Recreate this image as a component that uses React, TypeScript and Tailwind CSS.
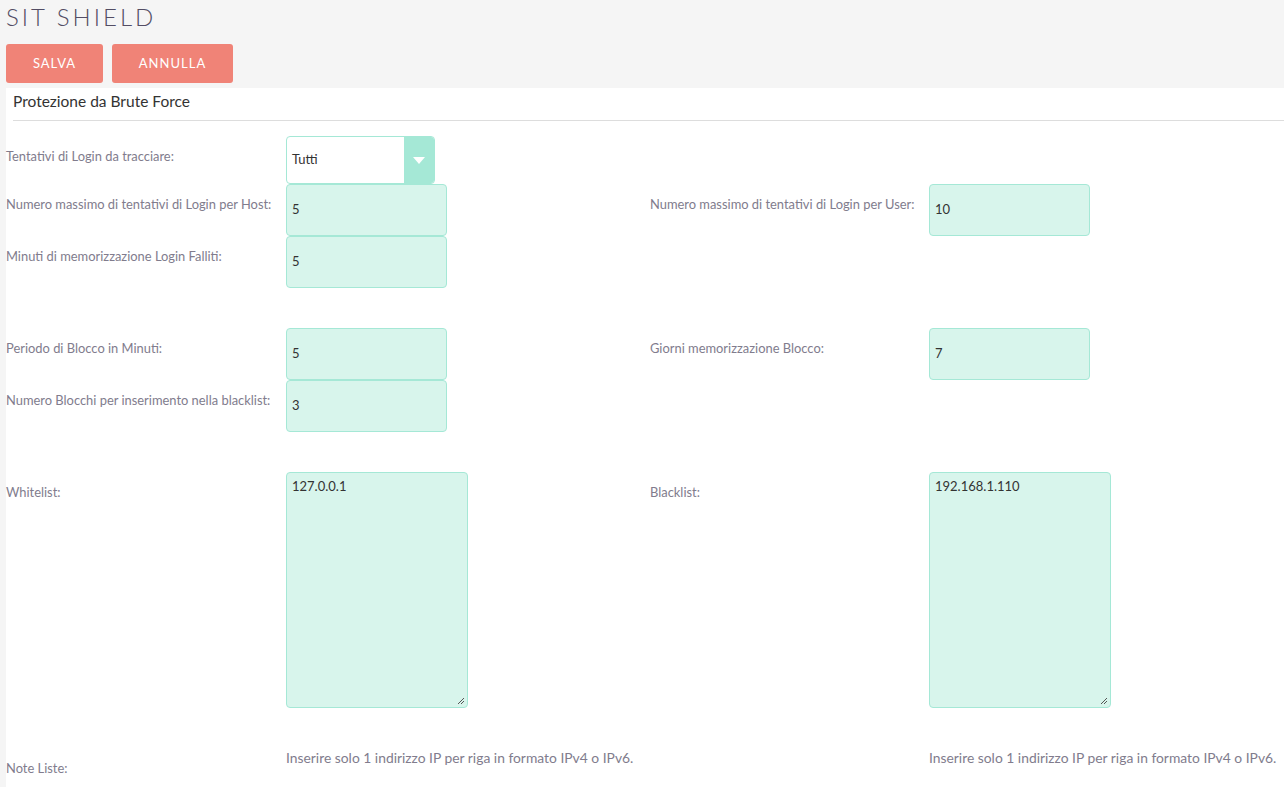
import React from 'react';

const Label: React.FC<{ children: React.ReactNode; w?: string }> = ({ children, w = 'w-[280px]' }) => (
  <div className={`${w} shrink-0 pt-[12px] text-[12.9px] leading-4 text-[#817c8d]`}>{children}</div>
);

const TextInput: React.FC<{ value: string }> = ({ value }) => (
  <div className="h-[52px] w-[161px] rounded-[4px] border border-[#a5e8d6] bg-[#d8f5ec] px-[5px] flex items-center text-[13px] text-[#333]">
    {value}
  </div>
);

const Field: React.FC<{ label: string; value: string; left?: boolean }> = ({ label, value, left }) => (
  <div className={`flex ${left ? 'w-[644px]' : ''}`}>
    <Label w={left ? 'w-[280px]' : 'w-[279px]'}>{label}</Label>
    <TextInput value={value} />
  </div>
);

const TextArea: React.FC<{ value: string }> = ({ value }) => (
  <div className="relative h-[236px] w-[182px] rounded-[4px] border border-[#a5e8d6] bg-[#d8f5ec] px-[5px] pt-[5px] text-[13px] leading-4 text-[#333]">
    {value}
    <svg className="absolute bottom-[2px] right-[2px]" width="8" height="8" viewBox="0 0 8 8">
      <path d="M7 1 L1 7 M7 4 L4 7" stroke="#555" strokeWidth="1" />
    </svg>
  </div>
);

const Note = () => (
  <div className="pt-[2px] text-[13.85px] leading-4 text-[#817c8d]">
    Inserire solo 1 indirizzo IP per riga in formato IPv4 o IPv6.
  </div>
);

export default function App() {
  return (
    <div className="min-h-screen bg-[#f5f5f5] pl-[6px] font-['Lato','Noto_Sans',sans-serif]">
      <div className="h-[44px]">
        <h1 className="text-[24px] leading-[34px] font-light tracking-[3px] text-[#534d64]">SIT SHIELD</h1>
      </div>
      <div className="flex gap-[9px]">
        <button className="h-[39px] w-[97px] rounded-[3px] bg-[#f08377] text-[13px] tracking-[1px] text-white">SALVA</button>
        <button className="h-[39px] w-[121px] rounded-[3px] bg-[#f08377] text-[13px] tracking-[1px] text-white">ANNULLA</button>
      </div>
      <div className="mt-[5px] bg-white min-h-[699px]">
        <div className="ml-[7px] h-[33px] border-b border-[#dddddd] pt-[3px] text-[15.5px] leading-5 text-[#333]">
          Protezione da Brute Force
        </div>
        <div className="pt-[15px]">
          <div className="flex">
            <div className="flex w-[644px]">
              <Label>Tentativi di Login da tracciare:</Label>
              <div className="flex h-[48px] w-[149px] overflow-hidden rounded-[4px] border border-[#a5e8d6] bg-white">
                <div className="flex flex-1 items-center pl-[5px] text-[13px] text-[#333]">Tutti</div>
                <div className="flex w-[30px] items-center justify-center bg-[#a5e8d6]">
                  <svg width="12" height="7" viewBox="0 0 12 7">
                    <path d="M0 0 H12 L6 7 Z" fill="#ffffff" />
                  </svg>
                </div>
              </div>
            </div>
          </div>
          <div className="flex">
            <Field left label="Numero massimo di tentativi di Login per Host:" value="5" />
            <Field label="Numero massimo di tentativi di Login per User:" value="10" />
          </div>
          <div className="flex">
            <Field left label="Minuti di memorizzazione Login Falliti:" value="5" />
          </div>
          <div className="h-[40px]" />
          <div className="flex">
            <Field left label="Periodo di Blocco in Minuti:" value="5" />
            <Field label="Giorni memorizzazione Blocco:" value="7" />
          </div>
          <div className="flex">
            <Field left label="Numero Blocchi per inserimento nella blacklist:" value="3" />
          </div>
          <div className="h-[40px]" />
          <div className="flex">
            <div className="flex w-[644px]">
              <Label>Whitelist:</Label>
              <TextArea value="127.0.0.1" />
            </div>
            <div className="flex">
              <Label w="w-[279px]">Blacklist:</Label>
              <TextArea value="192.168.1.110" />
            </div>
          </div>
          <div className="h-[40px]" />
          <div className="flex">
            <div className="flex w-[644px]">
              <Label>Note Liste:</Label>
              <Note />
            </div>
            <div className="flex">
              <div className="w-[279px]" />
              <Note />
            </div>
          </div>
        </div>
      </div>
    </div>
  );
}
